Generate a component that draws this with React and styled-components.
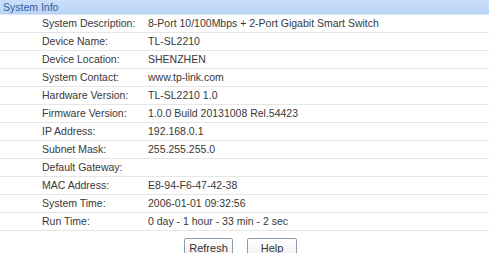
import React from "react";
import styled, { createGlobalStyle } from "styled-components";

const GlobalStyle = createGlobalStyle`
  body {
    margin: 0;
    background: #fff;
    font-family: "Liberation Sans", Arial, sans-serif;
  }
`;

const Page = styled.div`
  width: 489px;
  height: 253px;
  overflow: hidden;
`;

const Title = styled.div`
  height: 14px;
  line-height: 14px;
  padding-left: 3px;
  font-size: 10.5px;
  color: #2d5c9e;
  background: linear-gradient(#c9defa, #bcd5f7);
  border-bottom: 1px solid #d6e4f6;
`;

const Table = styled.div`
  display: grid;
  grid-template-columns: 148px 1fr;
`;

const Cell = styled.div`
  height: 17px;
  line-height: 17px;
  font-size: 10.5px;
  color: #383838;
  border-bottom: 1px solid #e6e6e6;
  padding-left: ${(p) => (p.$label ? "42px" : "0")};
  white-space: nowrap;
`;

const Buttons = styled.div`
  display: flex;
  justify-content: center;
  gap: 14px;
  padding-top: 7px;
  padding-right: 8px;
`;

const Button = styled.button`
  height: 20px;
  width: ${(p) => p.$w}px;
  padding: 0;
  font-family: "Liberation Sans", Arial, sans-serif;
  font-size: 11px;
  color: #333;
  background: linear-gradient(#ffffff, #eeeeee);
  border: 1px solid #8a9bb0;
  border-radius: 2px;
`;

const rows = [
  ["System Description:", "8-Port 10/100Mbps + 2-Port Gigabit Smart Switch"],
  ["Device Name:", "TL-SL2210"],
  ["Device Location:", "SHENZHEN"],
  ["System Contact:", "www.tp-link.com"],
  ["Hardware Version:", "TL-SL2210 1.0"],
  ["Firmware Version:", "1.0.0 Build 20131008 Rel.54423"],
  ["IP Address:", "192.168.0.1"],
  ["Subnet Mask:", "255.255.255.0"],
  ["Default Gateway:", ""],
  ["MAC Address:", "E8-94-F6-47-42-38"],
  ["System Time:", "2006-01-01 09:32:56"],
  ["Run Time:", "0 day - 1 hour - 33 min - 2 sec"],
];

export default function App() {
  return (
    <Page>
      <GlobalStyle />
      <Title>System Info</Title>
      <Table>
        {rows.map(([k, v]) => (
          <React.Fragment key={k}>
            <Cell $label>{k}</Cell>
            <Cell>{v}</Cell>
          </React.Fragment>
        ))}
      </Table>
      <Buttons>
        <Button $w={49}>Refresh</Button>
        <Button $w={50}>Help</Button>
      </Buttons>
    </Page>
  );
}
